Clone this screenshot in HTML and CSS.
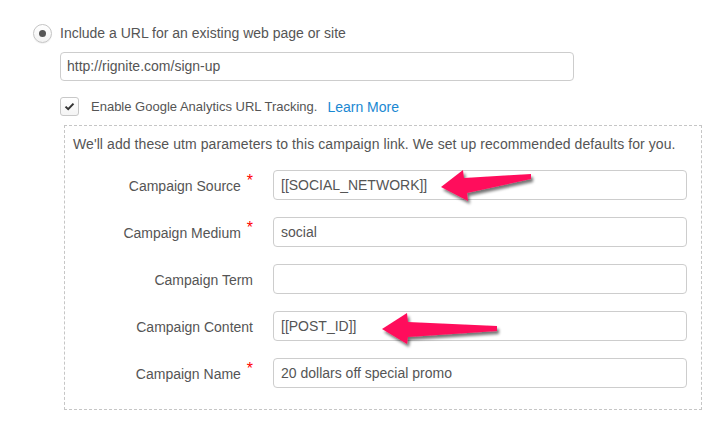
FILE: index.html
```html
<!DOCTYPE html>
<html>
<head>
<meta charset="utf-8">
<link rel="stylesheet" href="styles.css">
</head>
<body>
<div class="page">
  <div class="option">
    <span class="radio"><span class="radio-dot"></span></span>
    <span class="option-text">Include a URL for an existing web page or site</span>
  </div>
  <div class="indent">
    <div class="field url-field">http://rignite.com/sign-up</div>
    <div class="check-row">
      <span class="checkbox">
        <svg width="11" height="9" viewBox="0 0 11 9"><path d="M1.5 4.6 L4.2 7.2 L9.5 1.6" fill="none" stroke="#333" stroke-width="2"/></svg>
      </span>
      <span class="check-text">Enable Google Analytics URL Tracking.</span>
      <a class="learn">Learn More</a>
    </div>
    <div class="utm-box">
      <p class="intro">We'll add these utm parameters to this campaign link. We set up recommended defaults for you.</p>
      <div class="grid">
        <label class="lbl">Campaign Source <span class="req">*</span></label>
        <div class="field">[[SOCIAL_NETWORK]]</div>
        <label class="lbl">Campaign Medium <span class="req">*</span></label>
        <div class="field">social</div>
        <label class="lbl">Campaign Term</label>
        <div class="field"></div>
        <label class="lbl">Campaign Content</label>
        <div class="field">[[POST_ID]]</div>
        <label class="lbl">Campaign Name <span class="req">*</span></label>
        <div class="field">20 dollars off special promo</div>
      </div>
    </div>
  </div>
</div>
<svg class="arrows" width="719" height="421" viewBox="0 0 719 421">
  <defs>
    <filter id="sh" x="-20%" y="-50%" width="150%" height="200%">
      <feGaussianBlur in="SourceAlpha" stdDeviation="1.6"/>
      <feOffset dx="2" dy="3" result="b"/>
      <feComponentTransfer><feFuncA type="linear" slope="0.55"/></feComponentTransfer>
      <feMerge><feMergeNode/><feMergeNode in="SourceGraphic"/></feMerge>
    </filter>
  </defs>
  <g fill="#ff105b" filter="url(#sh)">
    <polygon points="441,187 463,170 464,178 531,174 531,179 467,193 468,201"/>
    <polygon points="382,329 407,313 408,322 497,326 497,331 408,337 407,344"/>
  </g>
</svg>
</body>
</html>
```
FILE: styles.css
```css
html, body {
  margin: 0;
  padding: 0;
  background: #fff;
}
body {
  font-family: "Liberation Sans", Arial, sans-serif;
  color: #555;
  position: relative;
  width: 719px;
  height: 421px;
  overflow: hidden;
}
.page {
  padding: 24px 0 0 33px;
}
.option {
  display: flex;
  align-items: center;
  height: 19px;
  font-size: 14px;
}
.radio {
  box-sizing: border-box;
  width: 19px;
  height: 19px;
  border: 1px solid #c4c4c4;
  border-radius: 50%;
  background: linear-gradient(#fff, #f2f2f2);
  box-shadow: 0 1px 1px rgba(0,0,0,0.06);
  display: flex;
  align-items: center;
  justify-content: center;
  margin-right: 8px;
}
.radio-dot {
  width: 7px;
  height: 7px;
  border-radius: 50%;
  background: #555;
}
.option-text {
  line-height: 19px;
}
.indent {
  margin-left: 27px;
}
.field {
  box-sizing: border-box;
  height: 30px;
  border: 1px solid #cdcdcd;
  border-radius: 4px;
  background: #fff;
  font-size: 14px;
  line-height: 28px;
  padding: 0 7px;
  color: #555;
  white-space: nowrap;
}
.url-field {
  width: 514px;
  height: 29px;
  line-height: 27px;
  padding-left: 6px;
  margin-top: 9px;
}
.check-row {
  display: flex;
  align-items: center;
  height: 19px;
  margin-top: 16px;
  font-size: 13px;
}
.checkbox {
  box-sizing: border-box;
  width: 19px;
  height: 19px;
  border: 1px solid #c8c8c8;
  border-radius: 3px;
  background: linear-gradient(#fff, #f4f4f4);
  display: flex;
  align-items: center;
  justify-content: center;
  margin-right: 12px;
}
.learn {
  color: #1a88d2;
  margin-left: 10px;
  font-size: 14px;
}
.utm-box {
  box-sizing: border-box;
  margin: 9px 0 0 4px;
  width: 638px;
  height: 285px;
  border: 1px dashed #c6c6c6;
  padding: 10px 0 0 8px;
}
.intro {
  margin: 0;
  font-size: 14px;
  line-height: 17px;
  letter-spacing: 0.08px;
}
.grid {
  display: grid;
  grid-template-columns: 180px 414px;
  column-gap: 20px;
  row-gap: 17px;
  margin-top: 17px;
  align-items: center;
}
.lbl {
  text-align: right;
  font-size: 14px;
  color: #555;
  padding-top: 1px;
}
.req {
  color: #f00;
  font-size: 16px;
  vertical-align: 5px;
  line-height: 0;
  margin-left: 2px;
}
.arrows {
  position: absolute;
  left: 0;
  top: 0;
  pointer-events: none;
}
```
